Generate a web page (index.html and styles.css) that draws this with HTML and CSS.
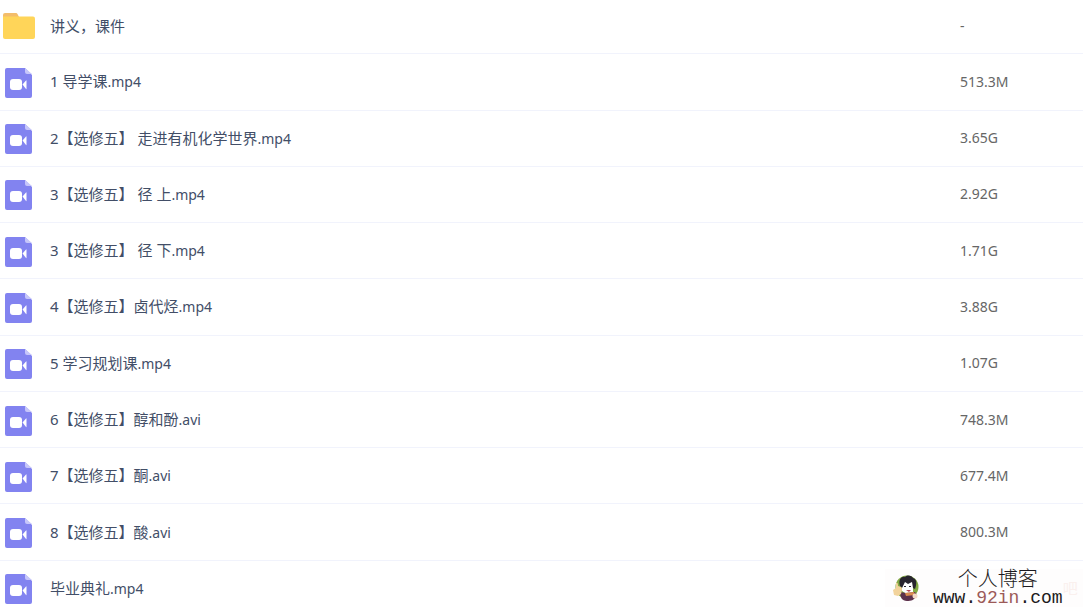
FILE: index.html
```html
<!DOCTYPE html>
<html lang="zh-CN">
<head>
    <meta charset="UTF-8">
    <meta name="viewport" content="width=device-width, initial-scale=1.0">
    <title>文件列表</title>
    <link rel="stylesheet" href="styles.css">
</head>
<body>
    <svg class="defs" aria-hidden="true">
        <symbol id="video" viewBox="0 0 32 32">
            <path fill="#8283f0" d="M4 1h18l7 7v21a2 2 0 0 1-2 2H4a2 2 0 0 1-2-2V3a2 2 0 0 1 2-2z"/>
            <path fill="#c6c6fa" d="M22 1l7 6h-5a2 2 0 0 1-2-2z"/>
            <rect x="7" y="12" width="12" height="11" rx="3" fill="#fff"/>
            <path fill="#fff" d="M19.500 17.500l3.500-4q.5-.5 .5 .5v7.500q0 1-.5.500z"/>
        </symbol>
        <symbol id="folder" viewBox="0 0 32 32">
            <path fill="#f3bd6b" d="M2 2h11q1 0 1.500 1l2 4H0V4q0-2 2-2z"/>
            <path fill="#ffd559" d="M0 5.500h30q2 0 2 2V26q0 2-2 2H2q-2 0-2-2z"/>
        </symbol>
    </svg>

    <table class="files">
        <tbody>
            <tr>
                <td class="name"><svg class="icon"><use href="#folder"/></svg><a href="#">讲义，课件</a></td>
                <td class="size">-</td>
            </tr>
            <tr>
                <td class="name"><svg class="icon"><use href="#video"/></svg><a href="#">1 导学课<span class="ext">.mp4</span></a></td>
                <td class="size">513.3M</td>
            </tr>
            <tr>
                <td class="name"><svg class="icon"><use href="#video"/></svg><a href="#">2【选修五】 走进有机化学世界<span class="ext">.mp4</span></a></td>
                <td class="size">3.65G</td>
            </tr>
            <tr>
                <td class="name"><svg class="icon"><use href="#video"/></svg><a href="#">3【选修五】 径 上<span class="ext">.mp4</span></a></td>
                <td class="size">2.92G</td>
            </tr>
            <tr>
                <td class="name"><svg class="icon"><use href="#video"/></svg><a href="#">3【选修五】 径 下<span class="ext">.mp4</span></a></td>
                <td class="size">1.71G</td>
            </tr>
            <tr>
                <td class="name"><svg class="icon"><use href="#video"/></svg><a href="#">4【选修五】卤代烃<span class="ext">.mp4</span></a></td>
                <td class="size">3.88G</td>
            </tr>
            <tr>
                <td class="name"><svg class="icon"><use href="#video"/></svg><a href="#">5 学习规划课<span class="ext">.mp4</span></a></td>
                <td class="size">1.07G</td>
            </tr>
            <tr>
                <td class="name"><svg class="icon"><use href="#video"/></svg><a href="#">6【选修五】醇和酚<span class="ext">.avi</span></a></td>
                <td class="size">748.3M</td>
            </tr>
            <tr>
                <td class="name"><svg class="icon"><use href="#video"/></svg><a href="#">7【选修五】酮<span class="ext">.avi</span></a></td>
                <td class="size">677.4M</td>
            </tr>
            <tr>
                <td class="name"><svg class="icon"><use href="#video"/></svg><a href="#">8【选修五】酸<span class="ext">.avi</span></a></td>
                <td class="size">800.3M</td>
            </tr>
            <tr>
                <td class="name"><svg class="icon"><use href="#video"/></svg><a href="#">毕业典礼<span class="ext">.mp4</span></a></td>
                <td class="size"></td>
            </tr>
        </tbody>
    </table>

    <div class="watermark">
        <svg class="avatar" viewBox="0 0 28 28">
            <circle cx="15" cy="13" r="11.500" fill="#83a944"/>
            <path fill="#fff" d="M10 8h11v10l-5 3-6-4z"/>
            <path fill="#28242e" d="M8 12C6 5 10 2 13 3c3-3 7-1 8 1 4 1 4 6 2 11l-2-1-1-6-4 2-3-2-3 6z"/>
            <path fill="#28242e" d="M12 12h2v1h-2zM17 12h2v1h-2z"/>
            <path fill="#b5455a" d="M14 16h5l-2 2z"/>
            <path fill="#5d304c" d="M8 18l6 1 9-1 2 3c-2 5-6 6-10 6-5 0-7-4-7-9z"/>
            <path fill="#d98950" d="M13 19l9-1 1 3-9 1z"/>
            <path fill="#f2d39c" d="M4 9q2-1 2 3l3 1q2 1 0 7l-3 2-4-1-1-5 3-2z"/>
            <circle cx="23" cy="22" r="2.500" fill="#f3d8c6"/>
        </svg>
        <div class="brand">
            <span class="brand-name">个人博客</span>
            <span class="brand-url">www.<span class="accent">92in</span>.com</span>
        </div>
        <span class="stamp">吧</span>
    </div>
</body>
</html>
```
FILE: styles.css
```css
body {
    margin: 0;
    background: #fff;
    overflow: hidden;
    font-family: "Noto Sans", "Noto Sans CJK SC", sans-serif;
    font-size: 15px;
    line-height: 20px;
    color: #424e67;
}

.defs {
    position: absolute;
    width: 0;
    height: 0;
}

/* file list, scrolled slightly past its top edge */
.files {
    display: block;
    margin-top: -2px;
}

.files tbody {
    display: grid;
    grid-auto-rows: 1fr;
    min-height: 619px;
}

.files tr {
    display: flex;
    align-items: center;
    box-sizing: border-box;
    padding-top: 2px;
    border-bottom: 1px solid #f1f3fc;
}

.files td {
    padding: 0;
}

.files .name {
    flex: 1;
    display: flex;
    align-items: center;
    gap: 15px;
    padding-left: 3px;
}

.name a {
    color: inherit;
    text-decoration: none;
    white-space: pre;
    padding-bottom: 2px;
}

.name a:hover {
    color: #06a7ff;
}

.icon {
    width: 32px;
    height: 32px;
}

.ext,
.size {
    font-size: 14px;
}

.files .size {
    width: 123px;
    padding-bottom: 2px;
    color: #666;
}

/* site mark over the bottom right corner */
.watermark {
    position: absolute;
    right: 0;
    bottom: 3px;
    display: flex;
    align-items: center;
    box-sizing: border-box;
    width: 198px;
    height: 38px;
    padding-left: 7px;
    background: #fefdfd;
}

.avatar {
    width: 28px;
    height: 28px;
}

.brand {
    display: flex;
    flex-direction: column;
    align-items: center;
    margin-left: 13px;
    color: #1c1a20;
}

.brand-name {
    font-size: 20px;
    font-weight: 300;
    line-height: 20px;
}

.brand-url {
    font-family: "Liberation Mono", monospace;
    font-size: 18px;
    line-height: 18px;
}

.accent {
    color: #9c5a58;
}

.stamp {
    color: #faf0ee;
}
```
